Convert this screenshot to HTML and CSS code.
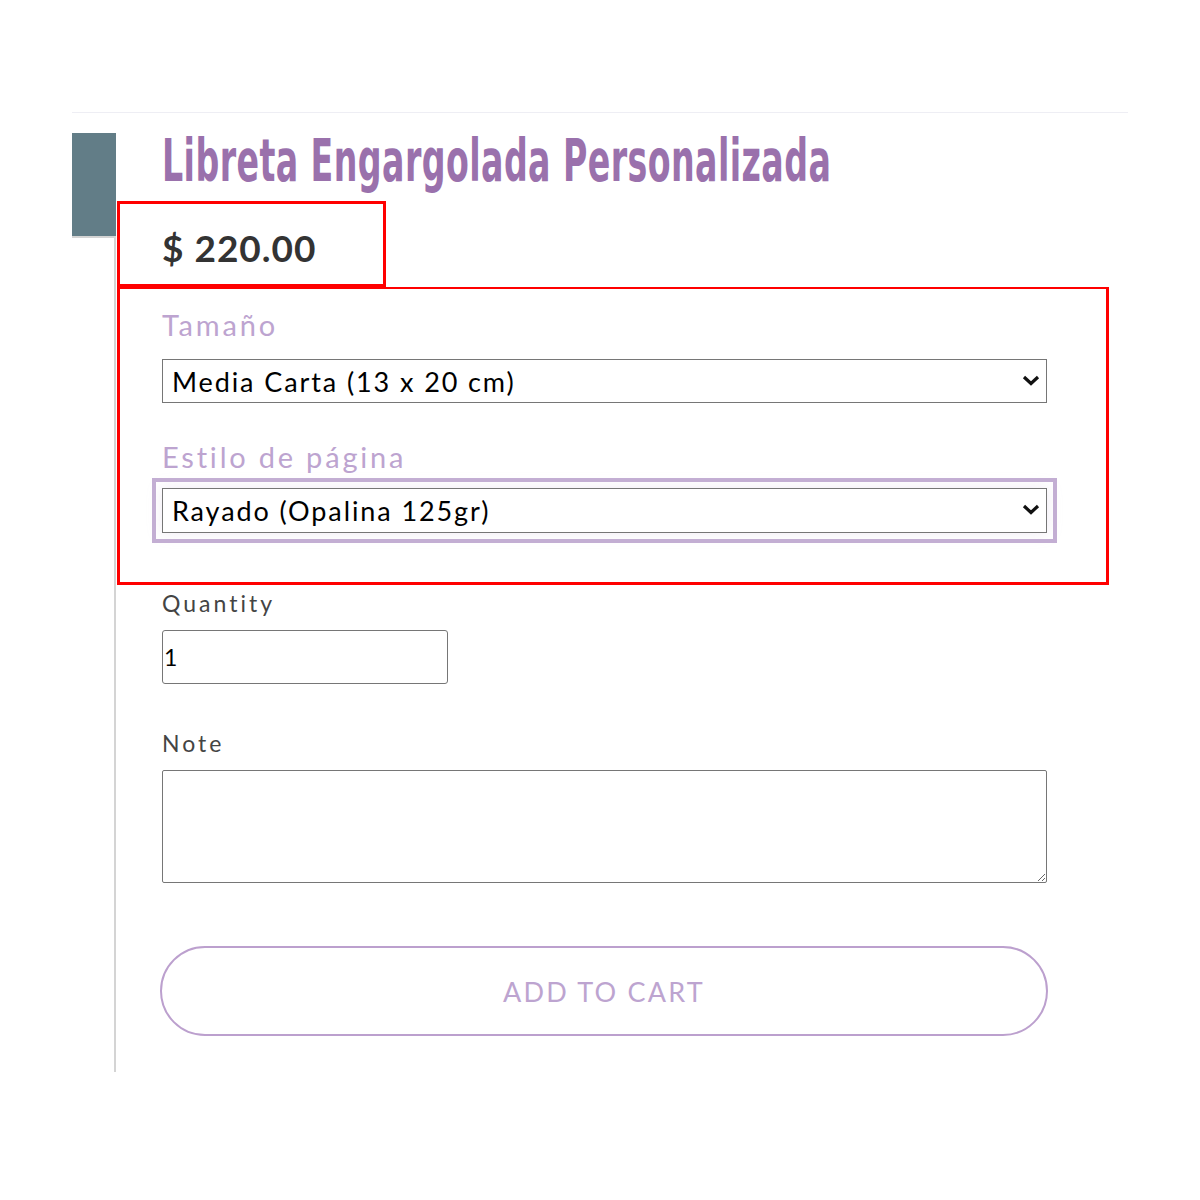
FILE: index.html
```html
<!DOCTYPE html>
<html>

  <head>

    <meta name="viewport" content="width=device-width, initial-scale=1.0">

    <title>Libreta Engargolada Personalizada</title>

    <link rel="stylesheet" href="styles.css">

  </head>
  <body>

    <div class="page">

      <div class="page-rule"></div>

      <div class="product">

        <div class="gallery">
          <div class="gallery-thumb"></div>
        </div>

        <div class="info">

          <h1 class="title"><span class="title-text">Libreta Engargolada Personalizada</span></h1>

          <div class="price-box">
            <div class="price">$ 220.00</div>
          </div>

          <div class="options-box">
            <div class="option">
              <label class="option-label" for="size">Tamaño</label>
              <div class="select-wrap">
                <select id="size" class="option-select">
                  <option>Media Carta (13 x 20 cm)</option>
                  <option>Carta (21.5 x 28 cm)</option>
                </select>
                <svg class="select-arrow" width="18" height="11" viewBox="0 0 18 11"><path d="M2 2 L9 8.5 L16 2" fill="none" stroke="#111" stroke-width="3.2"/></svg>
              </div>
            </div>
            <div class="option">
              <label class="option-label" for="style">Estilo de página</label>
              <div class="select-wrap">
                <select id="style" class="option-select option-select-focus">
                  <option>Rayado (Opalina 125gr)</option>
                  <option>Blanco (Opalina 125gr)</option>
                </select>
                <svg class="select-arrow" width="18" height="11" viewBox="0 0 18 11"><path d="M2 2 L9 8.5 L16 2" fill="none" stroke="#111" stroke-width="3.2"/></svg>
              </div>
            </div>
          </div>

          <div class="field">
            <label class="field-label" for="quantity">Quantity</label>
            <input id="quantity" class="field-quantity" type="number" value="1" min="1">
          </div>

          <div class="field field-note">
            <label class="field-label" for="note">Note</label>
            <textarea id="note" class="field-note-input"></textarea>
          </div>

          <button class="add-to-cart">ADD TO CART</button>

        </div>

      </div>

    </div>

  </body>
</html>
```

FILE: styles.css
```css
* {
  font-family: "Lato", "Noto Sans", sans-serif;
  box-sizing: border-box;
}

body {
  margin: 0px;
  padding: 0px;
  background-color: rgb(255, 255, 255);
}

.page {
  padding: 112px 72px 0px 72px;
}

.page-rule {
  height: 1px;
  background-color: rgb(238, 238, 244);
}

.product {
  display: flex;
  margin-top: 20px;
}

.gallery {
  width: 44px;
  height: 939px;
  border-right: 2px solid rgb(212, 212, 212);
}

.gallery-thumb {
  width: 44px;
  height: 105px;
  background-color: rgb(98, 125, 135);
  border-bottom: 2px solid rgb(212, 212, 212);
}

.info {
  flex: 1 0 0;
  padding-left: 1px;
}

.title {
  margin: 0px;
  padding-left: 45px;
  height: 68px;
  line-height: 56px;
  white-space: nowrap;
}

.title-text {
  display: inline-block;
  font-family: "DejaVu Sans Condensed", "DejaVu Sans", sans-serif;
  font-weight: 700;
  font-size: 44px;
  color: rgb(154, 113, 172);
  letter-spacing: 0.5px;
  transform-origin: left center;
  transform: scale(0.84, 1.35);
}

.price-box {
  width: 269px;
  height: 86px;
  border: 3px solid rgb(255, 0, 0);
  padding: 26px 0px 0px 42px;
}

.price {
  font-weight: 700;
  font-size: 37px;
  line-height: 36px;
  color: rgb(51, 51, 51);
  letter-spacing: 1px;
}

.options-box {
  width: 992px;
  height: 298px;
  border: 3px solid rgb(255, 0, 0);
  border-top-width: 2px;
  padding: 18px 0px 0px 42px;
}

.option {
  display: flex;
  flex-direction: column;
  margin-bottom: 36px;
}

.option-label {
  font-size: 29px;
  line-height: 36px;
  color: rgb(189, 164, 208);
  letter-spacing: 2.8px;
  margin-bottom: 16px;
}

.option + .option .option-label {
  margin-bottom: 13px;
}

.select-wrap {
  position: relative;
  width: 885px;
}

.option-select {
  display: block;
  width: 885px;
  height: 44px;
  appearance: none;
  font-size: 27px;
  letter-spacing: 1.9px;
  color: rgb(0, 0, 0);
  border: 1.5px solid rgb(118, 118, 118);
  border-radius: 0px;
  background-color: rgb(255, 255, 255);
  padding-left: 9px;
}

.option-select-focus {
  height: 45px;
  outline: 4px solid rgb(195, 174, 211);
  outline-offset: 6px;
  box-shadow: 0px 0px 14px rgba(195, 174, 211, 0.25);
}

.select-arrow {
  position: absolute;
  right: 7px;
  top: 16px;
  pointer-events: none;
}

.field {
  display: flex;
  flex-direction: column;
  align-items: flex-start;
  padding-left: 45px;
  margin-top: 3px;
}

.field-label {
  font-size: 23px;
  line-height: 30px;
  color: rgb(68, 68, 68);
  letter-spacing: 3px;
  margin-bottom: 12px;
}

.field-quantity {
  width: 286px;
  height: 54px;
  font-size: 23px;
  color: rgb(0, 0, 0);
  border: 1.5px solid rgb(118, 118, 118);
  border-radius: 3px;
  padding: 0px 1px;
}

.field-note {
  margin-top: 44px;
}

.field-note-input {
  width: 885px;
  height: 113px;
  border: 1.5px solid rgb(118, 118, 118);
  border-radius: 2px;
}

.add-to-cart {
  display: block;
  margin: 63px 0px 0px 43px;
  width: 888px;
  height: 90px;
  border: 2px solid rgb(188, 160, 206);
  border-radius: 45px;
  background-color: rgb(255, 255, 255);
  color: rgb(189, 164, 208);
  font-size: 27px;
  letter-spacing: 2.2px;
  user-select: none;
}

.add-to-cart:hover {
  cursor: pointer;
  background-color: rgb(250, 246, 252);
}
```
